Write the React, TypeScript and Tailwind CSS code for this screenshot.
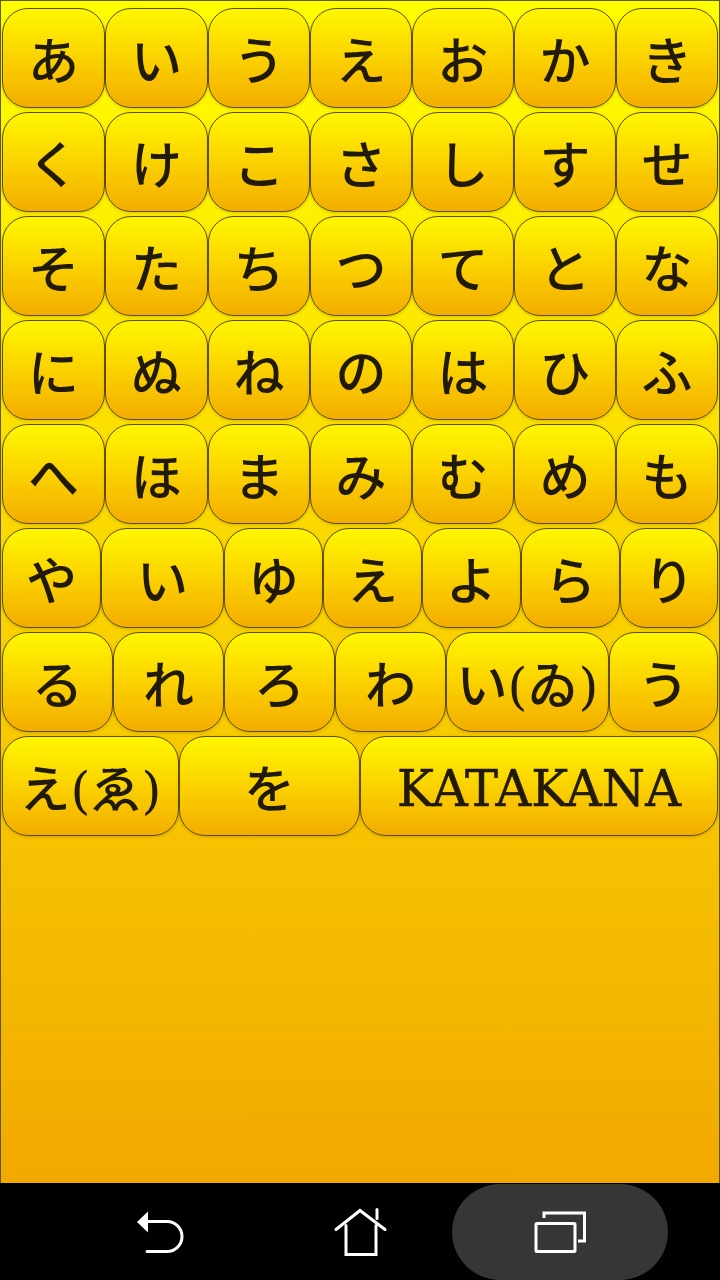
const rows: { label: string; width: string }[][] = [
  ["あ", "い", "う", "え", "お", "か", "き"],
  ["く", "け", "こ", "さ", "し", "す", "せ"],
  ["そ", "た", "ち", "つ", "て", "と", "な"],
  ["に", "ぬ", "ね", "の", "は", "ひ", "ふ"],
  ["へ", "ほ", "ま", "み", "む", "め", "も"],
].map((row) =>
  row.map((label, i) => ({
    label,
    width: ["w-[103px]", "w-[103px]", "w-[102px]", "w-[102px]", "w-[102px]", "w-[102px]", "w-[102px]"][i],
  }))
);

rows.push(
  [
    { label: "や", width: "w-[99px]" },
    { label: "い", width: "w-[123px]" },
    { label: "ゆ", width: "w-[99px]" },
    { label: "え", width: "w-[99px]" },
    { label: "よ", width: "w-[99px]" },
    { label: "ら", width: "w-[99px]" },
    { label: "り", width: "w-[98px]" },
  ],
  [
    { label: "る", width: "w-[111px]" },
    { label: "れ", width: "w-[111px]" },
    { label: "ろ", width: "w-[111px]" },
    { label: "わ", width: "w-[111px]" },
    { label: "い(ゐ)", width: "w-[163px]" },
    { label: "う", width: "w-[109px]" },
  ],
  [
    { label: "え(ゑ)", width: "w-[177px]" },
    { label: "を", width: "w-[181px]" },
    { label: "KATAKANA", width: "w-[358px]" },
  ]
);

function Key({ label, width }: { label: string; width: string }) {
  return (
    <button
      className={`${width} h-[100px] shrink-0 rounded-[26px] border border-[#5c4d0c] bg-gradient-to-b from-[#fff700] to-[#f3ad00] pt-[8px] text-[#211a06] leading-none flex items-center justify-center whitespace-nowrap shadow-[0_1px_3px_rgba(120,90,0,0.3)] ${
        label === "KATAKANA" ? "text-[49.5px] [-webkit-text-stroke:0.6px_#211a06]" : "text-[51px] font-medium"
      }`}
    >
      {label}
    </button>
  );
}

export default function App() {
  return (
    <div className="w-[720px] h-[1280px] flex flex-col overflow-hidden bg-black [font-family:'DejaVu_Serif','Noto_Sans_CJK_JP',serif]">
      <div className="h-[1183px] shrink-0 border-l border-t border-r border-[#5d5a10] bg-gradient-to-b from-[#ffff00] to-[#f1a900] pt-[7px] pl-px flex flex-col gap-[4px]">
        {rows.map((row, i) => (
          <div key={i} className="flex">
            {row.map((key, j) => (
              <Key key={j} label={key.label} width={key.width} />
            ))}
          </div>
        ))}
      </div>
      <div className="flex-1 flex items-center">
        <div className="w-[320px] flex justify-center">
          <svg width="60" height="60" viewBox="130 1201.500 60 60" fill="none">
            <path d="M148 1221H167a15 15 0 0 1 0 30H147" stroke="#fff" strokeWidth="3" strokeLinecap="round" />
            <path d="M148 1211 137 1221.500 148 1232z" fill="#fff" />
          </svg>
        </div>
        <div className="w-[80px] flex justify-center">
          <svg width="60" height="60" viewBox="330 1201.500 60 60" fill="none" stroke="#fff" strokeWidth="3" strokeLinecap="round">
            <path d="M336 1229 360 1210 385 1229" />
            <path d="M377 1209V1218" />
            <path d="M346 1225V1254H376V1225" />
          </svg>
        </div>
        <div className="ml-[52px] w-[216px] h-[96px] self-end rounded-[48px] bg-[#363636] flex items-center justify-center">
          <svg width="60" height="60" viewBox="530 1202 60 60" fill="none" stroke="#fff" strokeWidth="3">
            <rect x="536" y="1223.500" width="39" height="28" rx="1" />
            <path d="M544 1218V1213H584.500V1241H578" />
          </svg>
        </div>
      </div>
    </div>
  );
}
